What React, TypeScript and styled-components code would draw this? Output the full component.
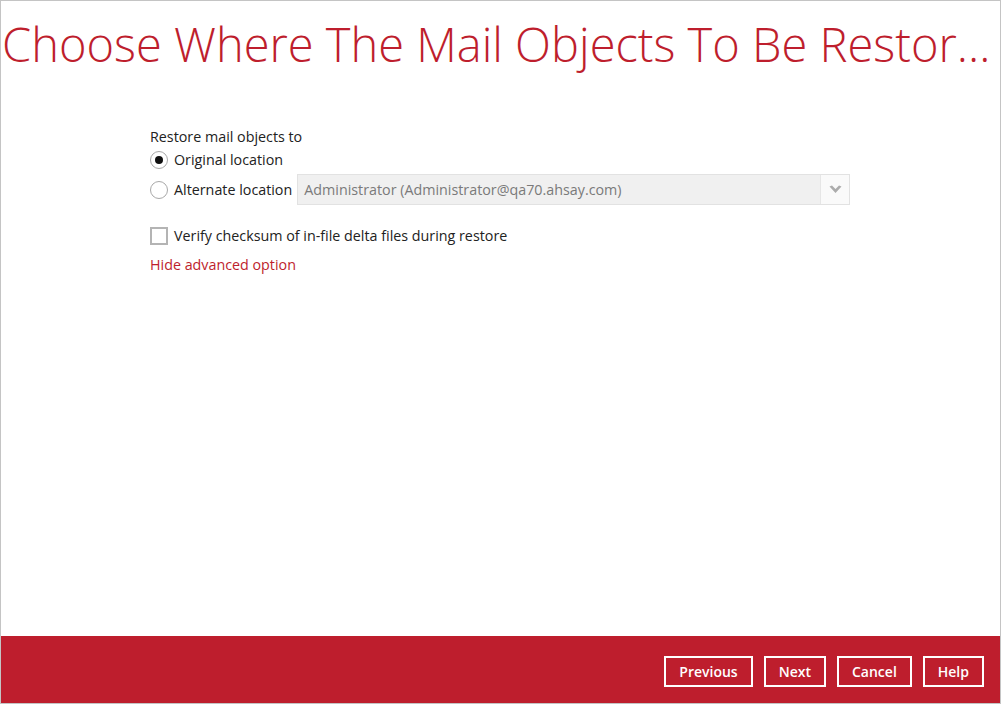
import styled, { createGlobalStyle } from "styled-components";

const GlobalStyle = createGlobalStyle`
  html, body {
    margin: 0;
    padding: 0;
    background: #ffffff;
  }
  body {
    font-family: "Open Sans", "Noto Sans", sans-serif;
  }
`;

const Window = styled.div`
  width: 1001px;
  height: 704px;
  box-sizing: border-box;
  border: 1px solid #c4c4c4;
  display: flex;
  flex-direction: column;
  background: #ffffff;
  overflow: hidden;
`;

const Title = styled.h1`
  margin: 0;
  padding: 12px 0 2px 1px;
  font-size: 47px;
  font-weight: 300;
  line-height: 63px;
  color: #be1e2d;
  white-space: nowrap;
  overflow: hidden;
  text-overflow: ellipsis;
`;

const Content = styled.main`
  flex: 1;
  padding: 49px 0 0 149px;
  color: #222222;
  font-size: 14.3px;
  line-height: 20px;
`;

const Caption = styled.div`
  margin-bottom: 3px;
`;

const Row = styled.label<{ $gap?: number }>`
  display: flex;
  align-items: center;
  gap: 6px;
  margin-top: ${(p) => p.$gap ?? 0}px;
  cursor: pointer;
`;

const Radio = styled.span<{ $checked?: boolean }>`
  width: 18px;
  height: 18px;
  box-sizing: border-box;
  border: 1.5px solid #a8a8a8;
  border-radius: 50%;
  display: flex;
  align-items: center;
  justify-content: center;
  flex-shrink: 0;

  &::after {
    content: "";
    width: 8px;
    height: 8px;
    border-radius: 50%;
    background: ${(p) => (p.$checked ? "#111111" : "transparent")};
  }
`;

const Checkbox = styled.span`
  width: 18px;
  height: 18px;
  box-sizing: border-box;
  border: 2px solid #b4b4b4;
  flex-shrink: 0;
`;

const Select = styled.div`
  margin-left: -1px;
  width: 553px;
  height: 31px;
  box-sizing: border-box;
  border: 1px solid #e2e2e2;
  background: #f0f0f0;
  display: flex;
  align-items: center;
  color: #7a7a7a;
`;

const SelectValue = styled.span`
  flex: 1;
  padding-left: 6px;
`;

const SelectArrow = styled.span`
  width: 28px;
  height: 100%;
  background: #fafafa;
  border-left: 1px solid #e6e6e6;
  display: flex;
  align-items: center;
  justify-content: center;
`;

const Link = styled.a`
  display: block;
  margin-top: 9px;
  color: #be1e2d;
  text-decoration: none;
  cursor: pointer;
`;

const Footer = styled.footer`
  height: 67px;
  box-sizing: border-box;
  background: #be1e2d;
  display: flex;
  justify-content: flex-end;
  align-items: flex-start;
  gap: 11px;
  padding: 20px 16px 0 0;
`;

const Button = styled.button`
  height: 31px;
  box-sizing: border-box;
  padding: 0 13px;
  border: 2px solid #ffffff;
  background: transparent;
  color: #ffffff;
  font-family: "Open Sans", "Noto Sans", sans-serif;
  font-size: 14px;
  font-weight: 600;
  line-height: 26px;
  cursor: pointer;
`;

export default function App() {
  return (
    <>
      <GlobalStyle />
      <Window>
        <Title>Choose Where The Mail Objects To Be Restored</Title>
        <Content>
          <Caption>Restore mail objects to</Caption>
          <Row>
            <Radio $checked />
            <span>Original location</span>
          </Row>
          <Row $gap={4}>
            <Radio />
            <span>Alternate location</span>
            <Select>
              <SelectValue>Administrator (Administrator@qa70.ahsay.com)</SelectValue>
              <SelectArrow>
                <svg width="13" height="9" viewBox="0 0 13 9">
                  <path d="M0.5 1.5 L3 0.5 L6.5 4 L10 0.5 L12.5 1.5 L6.5 8 Z" fill="#acacac" />
                </svg>
              </SelectArrow>
            </Select>
          </Row>
          <Row $gap={21}>
            <Checkbox />
            <span>Verify checksum of in-file delta files during restore</span>
          </Row>
          <Link>Hide advanced option</Link>
        </Content>
        <Footer>
          <Button>Previous</Button>
          <Button>Next</Button>
          <Button>Cancel</Button>
          <Button>Help</Button>
        </Footer>
      </Window>
    </>
  );
}
